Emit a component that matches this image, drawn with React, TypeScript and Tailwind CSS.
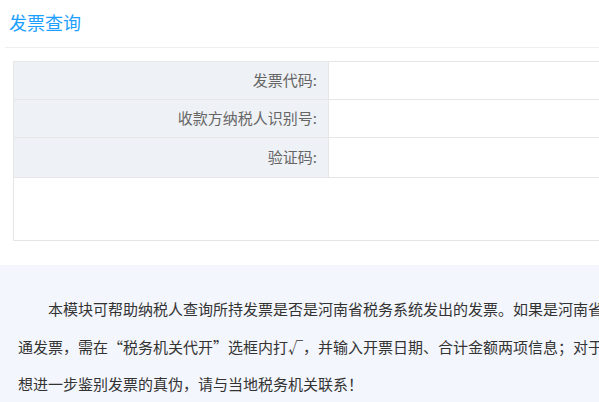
const FIELDS = ['发票代码:', '收款方纳税人识别号:', '验证码:'];

export default function App() {
  return (
    <div
      className="w-[599px] h-[402px] overflow-hidden bg-white"
      style={{ fontFamily: '"Noto Sans CJK SC", "Noto Sans", sans-serif' }}
    >
      <div className="ml-[5px] w-[1400px] h-[48px] border-b border-[#eeeeee] pl-[4px] pt-[9px]">
        <h1 className="text-[18px] leading-[26px] text-[#1e9fff] font-normal">发票查询</h1>
      </div>

      <div className="ml-[13px] mt-[13px] w-[1400px] border border-[#e6e6e6]">
        {FIELDS.map((label, i) => (
          <div
            key={label}
            className={`flex ${i === 2 ? 'h-[40px]' : 'h-[38px]'} border-b border-[#e6e6e6]`}
          >
            <div className="w-[315px] shrink-0 bg-[#eef1f5] border-r border-[#e6e6e6] flex items-center justify-end pr-[11px] text-[15px] text-[#666666]">
              {label}
            </div>
            <div className="flex-1 bg-white" />
          </div>
        ))}
        <div className="h-[62px]" />
      </div>

      <div className="mt-[24px] w-[1400px] h-[200px] bg-[#f3f6fc] pl-[18px] pt-[25px]">
        <p className="text-[15px] leading-[37.5px] text-[#333333] whitespace-nowrap">
          <span className="pl-[30px]">本模块可帮助纳税人查询所持发票是否是河南省税务系统发出的发票。如果是河南省税务机关代开的普</span>
          <br />
          通发票，需在“税务机关代开”选框内打√，并输入开票日期、合计金额两项信息；对于查询结果不能确认或者
          <br />
          想进一步鉴别发票的真伪，请与当地税务机关联系！
        </p>
      </div>
    </div>
  );
}
